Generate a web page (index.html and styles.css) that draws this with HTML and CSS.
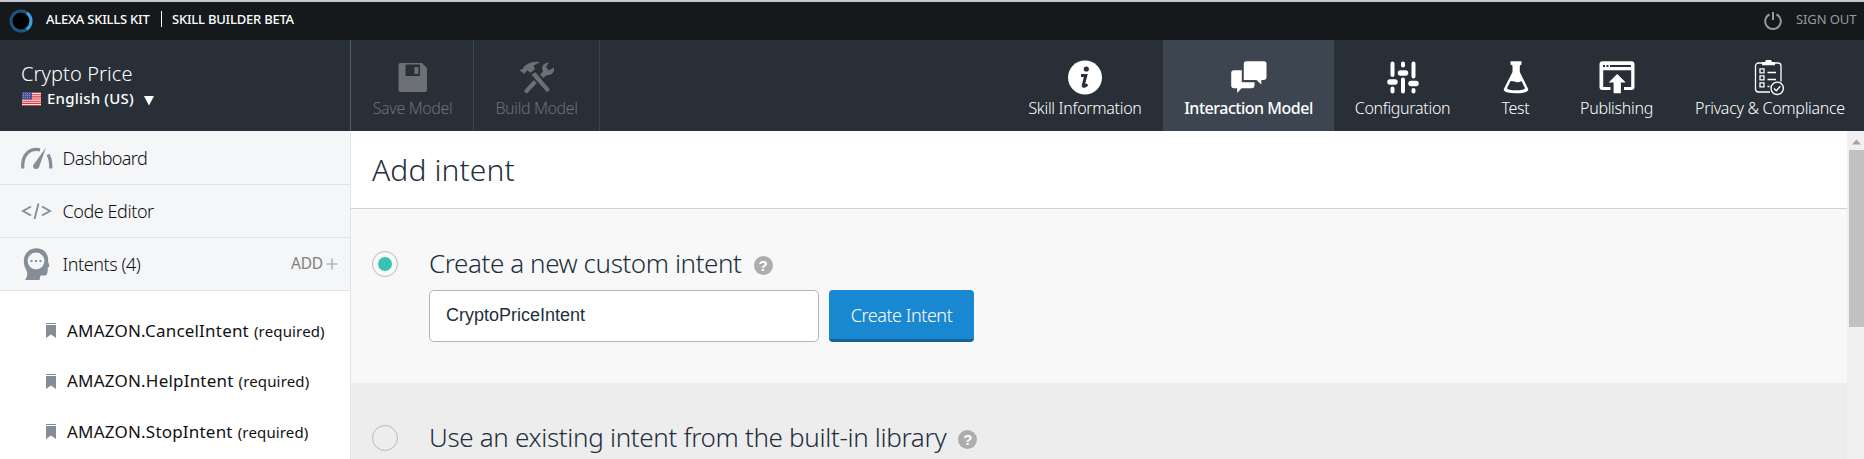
FILE: index.html
```html
<!DOCTYPE html>
<html lang="en">
<head>
<meta charset="utf-8">
<title>Skill Builder</title>
<link rel="stylesheet" href="styles.css">
</head>
<body>
<div class="topbar">
  <svg class="ring" viewBox="0 0 24 24"><circle cx="12" cy="12" r="10" fill="#000" stroke="#1c557e" stroke-width="3"/><path d="M18 4A10 10 0 0 1 17.500 20.300" fill="none" stroke="#409cda" stroke-width="3"/></svg>
  <span class="brand kit">ALEXA SKILLS KIT</span>
  <span class="bar"></span>
  <span class="brand beta">SKILL BUILDER BETA</span>
  <svg class="power" viewBox="0 0 20 20" fill="none" stroke="#999" stroke-width="2"><path d="M6.500 3.300A7.800 7.800 0 1 0 13.500 3.300M10 1v8"/></svg>
  <span class="brand signout">SIGN OUT</span>
</div>
<header class="header">
  <div class="skill">
    <div class="skill-name"><span>Crypto Price</span></div>
    <div class="locale">
      <svg class="flag" viewBox="0 0 19 14"><path fill="#f5e9ea" d="M0 0h19v14H0z"/><path stroke="#d9363e" stroke-width="1.100" d="M0 .5h19M0 2.700h19M0 4.900h19M0 7h19M0 9.200h19M0 11.400h19M0 13.500h19"/><path fill="#4a4f93" d="M0 0h10v7.500H0z"/><path stroke="#a7aacb" stroke-width=".8" stroke-dasharray="1 1" d="M1 1.500h8M1 3.500h8M1 5.500h8"/></svg>
      <span class="lang">English (US)</span>
      <svg class="caret" viewBox="0 0 10 10"><path fill="#fff" d="M0 0h10L5 9.500z"/></svg>
    </div>
  </div>
  <div class="tool save">
    <svg class="icon" viewBox="0 0 36 36"><path fill="#6c7075" fill-rule="evenodd" d="M5.500 3H27l5 5v22a2 2 0 0 1-2 2H5.500a2 2 0 0 1-2-2V5a2 2 0 0 1 2-2zM11.500 4.500a1 1 0 0 0-1 1V15a1 1 0 0 0 1 1H24a1 1 0 0 0 1-1V5.500a1 1 0 0 0-1-1zM19.500 7h4v7h-4z"/></svg>
    <span>Save Model</span>
  </div>
  <div class="tool build">
    <svg class="icon" viewBox="0 0 36 36"><g fill="#6c7075"><path d="M.5 10L5 14l3-3.500 4 2.200 4-4-1.500-3L21 2Q12 .5 5.500 6l-1.800 3z"/><path d="M12.500 14.800L28 32.300l3-2.600L16.500 12.300z"/><path d="M14.800 20l3 3L9 32.500a2 2 0 0 1-3-3z"/><path d="M21 14.500l3-3a6 6 0 0 1 6-9l-3 4.500 3 3.500 5-3c1 5-3 8-7 7.500l-4 3z"/></g></svg>
    <span>Build Model</span>
  </div>
  <nav class="nav">
    <div class="item info">
      <svg class="icon" viewBox="0 0 36 36"><circle cx="18" cy="17.500" r="17" fill="#fff"/><circle cx="19.300" cy="9" r="2.600" fill="#282f37"/><path fill="none" stroke="#282f37" stroke-width="3" d="M14 15.500h4.800l-2.500 9.500c-.4 2 1.700 1.800 4-.7"/></svg>
      <span>Skill Information</span>
    </div>
    <div class="item model active">
      <svg class="icon" viewBox="0 0 36 36"><path fill="#fff" d="M15.300 1.300H33a2.500 2.500 0 0 1 2.500 2.500V17a3 3 0 0 1-3 3H30.300v4.500L25.500 20H12.800V3.800a2.500 2.500 0 0 1 2.500-2.500zM3 10.300h7.800v12h12.700v3a3 3 0 0 1-3 3H10.500L6.200 33v-4.700H3a3 3 0 0 1-2.800-3V13A2.800 2.800 0 0 1 3 10.300z"/></svg>
      <span>Interaction Model</span>
    </div>
    <div class="item config">
      <svg class="icon" viewBox="0 0 36 36" stroke="#fff" stroke-linecap="round" fill="none"><path stroke-width="4" d="M7.500 3.500V15M7.500 28.500v3M18 3.500v2M18 19.500v12M28.500 3.500v13M28.500 30v1.500"/><path stroke-width="5.500" d="M5 22h5M15.500 13h5M26 23.600h5"/></svg>
      <span>Configuration</span>
    </div>
    <div class="item test">
      <svg class="icon" viewBox="0 0 36 36"><path fill="#fff" fill-rule="evenodd" d="M12.500 1.300h11V4.500L21.800 5.500V12l8.400 17q1 4.300-12.200 4.300T5.800 29l8.700-17V5.500l-2-1zM12.500 21L9 28.300q1 2 9 2t9-2L23.500 21q-3 2-5.500 1t-5.500-1z"/></svg>
      <span>Test</span>
    </div>
    <div class="item publish">
      <svg class="icon" viewBox="0 0 36 36"><path fill="#fff" fill-rule="evenodd" d="M3.500 1.300h29a3 3 0 0 1 3 3V27a3 3 0 0 1-3 3H25v-3h7.200V10.300h-28V27h7.300v3H3.500a3 3 0 0 1-3-3V4.300a3 3 0 0 1 3-3zM4 5v2h2V5zM7.500 5v2h2V5zM11 5v2h21V5z"/><path fill="#fff" d="M18.200 14l8.600 8.500h-4.900v10.800h-7.300V22.500h-5z"/></svg>
      <span>Publishing</span>
    </div>
    <div class="item privacy">
      <svg class="icon" viewBox="0 0 36 36" fill="none" stroke="#fff" stroke-width="1.300"><path d="M10 3H6.500a3 3 0 0 0-3 3v23a3 3 0 0 0 3 3H18M23 3h3a3 3 0 0 1 3 3v15.500"/><path fill="#fff" stroke="none" d="M10 2h3l1-2h5l1 2h3v3.200H10z"/><path d="M8 8.800h4v4H8zM8 15.800h4v4H8zM8 22.800h4v4H8zM15.500 12.500H24M15.500 19.500H24M15.500 26.500h2"/><circle cx="25.200" cy="28.300" r="6.200"/><path d="M22 28.500l2.300 2.300 4-4.600"/></svg>
      <span>Privacy &amp; Compliance</span>
    </div>
  </nav>
</header>
<div class="body">
  <aside class="side">
    <div class="row dash">
      <svg class="side-icon" viewBox="0 0 34 36" fill="none" stroke="#858e98"><path stroke-width="3.300" d="M2.700 28.500C1.800 14 10 8 20 9.800M28 14.500q3 5 2.800 14"/><path fill="#858e98" stroke="none" d="M26 7.500L13 25.500a3.200 3.200 0 0 0 5.800 2.200z"/></svg>
      <span>Dashboard</span>
    </div>
    <div class="row code">
      <svg class="side-icon" viewBox="0 0 34 36" fill="none" stroke="#858e98" stroke-width="1.900"><path d="M11 13.500L3 18l8 4.500M18.500 10.500l-4 15.500M22 13.500L30 18l-8 4.500"/></svg>
      <span>Code Editor</span>
    </div>
    <div class="row intents">
      <svg class="side-icon" viewBox="0 0 34 36"><path fill="#858e98" d="M5 34q4-5 1-10.500C.5 13 6 2.500 16 2.200 24.500 2 29 9 28 15l1.500 5.500-1.800 1.200c.2 5-.5 8-3.700 7.800H20.500L19.500 34z"/><circle cx="16" cy="15" r="8.400" fill="#f5f6f8"/><path stroke="#858e98" stroke-width="2" d="M10.500 15h2M15 15h2M19.500 15h2"/></svg>
      <span>Intents (4)</span>
      <span class="add">ADD</span>
      <svg class="plus" viewBox="0 0 12 12"><path stroke="#b3b9c0" stroke-width="1.600" d="M6 .5v11M.5 6h11"/></svg>
    </div>
    <ul class="list">
      <li><svg class="mark" viewBox="0 0 10 16"><path fill="#858e98" d="M0 0h10v1H0zM0 2h10v13l-5-3.500L0 15z"/></svg><span class="name">AMAZON.CancelIntent</span><span class="req">(required)</span></li>
      <li><svg class="mark" viewBox="0 0 10 16"><path fill="#858e98" d="M0 0h10v1H0zM0 2h10v13l-5-3.500L0 15z"/></svg><span class="name">AMAZON.HelpIntent</span><span class="req">(required)</span></li>
      <li><svg class="mark" viewBox="0 0 10 16"><path fill="#858e98" d="M0 0h10v1H0zM0 2h10v13l-5-3.500L0 15z"/></svg><span class="name">AMAZON.StopIntent</span><span class="req">(required)</span></li>
    </ul>
  </aside>
  <main class="main">
    <h1 class="title"><span>Add intent</span></h1>
    <section class="option custom">
      <span class="radio on"></span>
      <div class="fields">
        <div class="label"><span class="create-label">Create a new custom intent</span><span class="help">?</span></div>
        <div class="form"><input class="input" type="text" value="CryptoPriceIntent"><button class="button"><span>Create Intent</span></button></div>
      </div>
    </section>
    <section class="option builtin">
      <span class="radio"></span>
      <div class="fields">
        <div class="label"><span class="existing-label">Use an existing intent from the built-in library</span><span class="help">?</span></div>
      </div>
    </section>
  </main>
  <div class="scroll">
    <svg class="up" viewBox="0 0 17 19"><path fill="#a3a3a3" d="M5 13.500h9L9.500 8.500z"/></svg>
    <div class="thumb"></div>
  </div>
</div>
</body>
</html>
```
FILE: styles.css
```css
* { box-sizing: border-box; }
body { margin: 0; height: 459px; overflow: hidden; font-family: "Noto Sans", "Open Sans", sans-serif; font-weight: 300; color: #111; display: flex; flex-direction: column; }
svg { display: block; flex: none; }
span { white-space: nowrap; }
.topbar { height: 40px; flex: none; background: #15191b; border-top: 2px solid #c9c9cb; display: flex; align-items: flex-start; padding-left: 9px; }
.ring { width: 24px; height: 24px; margin-top: 7px; }
.brand { font-size: 13px; line-height: 20px; margin-top: 7px; font-weight: 500; color: #fff; letter-spacing: -0.22px; }
.kit { margin-left: 13px; width: 107px; }
.bar { width: 1px; height: 16px; background: #fff; margin: 9px 10px 0 8px; }
.power { width: 20px; height: 20px; margin: 9px 13px 0 auto; }
.signout { width: 68px; color: #999; font-weight: 400; letter-spacing: -0.1px; }
.header { height: 91px; flex: none; background: #282f37; display: flex; }
.skill { width: 351px; border-right: 1px solid #56616d; padding: 20px 0 0 21px; color: #fff; }
.skill-name { font-size: 20px; line-height: 28px; letter-spacing: 0.1px; }
.locale { display: flex; align-items: center; height: 20px; }
.flag { width: 19px; height: 14px; margin: 2px 6px 0 1px; }
.lang { font-size: 15px; font-weight: 500; width: 97px; letter-spacing: 0.2px; }
.caret { width: 10px; height: 10px; margin-top: 6px; }
.tool { border-right: 1px solid #3a434e; color: #6c7075; letter-spacing: -0.38px; }
.tool, .item { display: flex; flex-direction: column; align-items: center; padding-top: 20px; font-size: 16px; line-height: 24px; }
.save { width: 123px; padding-left: 1px; }
.build { width: 126px; }
.icon { width: 36px; height: 36px; }
.nav { margin-left: auto; display: flex; color: #fff; letter-spacing: -0.3px; }
.info { width: 156px; }
.model { width: 171px; }
.config { width: 137px; }
.test { width: 89px; }
.publish { width: 113px; }
.privacy { width: 191px; padding-left: 3px; }
.active { background: #3d4650; font-weight: 500; letter-spacing: -0.48px; }
.body { flex: 1; display: flex; min-height: 0; }
.side { width: 351px; flex: none; border-right: 1px solid #e2e3e5; background: #fff; }
.row { height: 53px; display: flex; align-items: center; background: #f5f6f8; border-bottom: 1px solid #e2e3e5; padding-left: 20px; font-size: 18px; letter-spacing: -0.43px; }
.dash { height: 54px; letter-spacing: -0.62px; }
.side-icon { width: 34px; height: 36px; margin-right: 8.500px; }
.add { margin: 0 0 2px auto; width: 35px; font-size: 15.500px; font-weight: 400; letter-spacing: -0.2px; color: #808080; }
.plus { width: 12px; height: 12px; margin-right: 12px; }
.list { list-style: none; margin: 0; padding: 15px 0 0 46px; }
.list li { height: 50.500px; display: flex; align-items: center; color: #111; font-weight: 400; }
.mark { width: 10px; height: 16px; margin-right: 11px; }
.name { font-size: 17px; margin: 0 5px 2px 0; letter-spacing: 0.2px; }
.req { font-size: 15px; margin-bottom: 1px; letter-spacing: 0.15px; }
.main { flex: 1; min-width: 0; background: #f8f8f8; color: #232f3e; }
.title { margin: 0; height: 78px; background: #fff; border-bottom: 1px solid #cfd2d6; padding-left: 21px; font-size: 30px; line-height: 77px; font-weight: 300; letter-spacing: 0.1px; }
.option { display: flex; padding-left: 21px; }
.custom { height: 174px; padding-top: 36px; }
.builtin { height: 76px; padding-top: 36px; background: #ededed; }
.radio { width: 26px; height: 26px; margin: 6px 31px 0 0; border: 1px solid #b5b9c1; border-radius: 50%; flex: none; display: grid; place-items: center; }
.on::after { content: ""; width: 14px; height: 14px; border-radius: 50%; background: #37c2b3; }
.label { display: flex; align-items: center; font-size: 26px; height: 36px; }
.create-label { letter-spacing: -0.42px; }
.existing-label { letter-spacing: -0.33px; }
.help { width: 19px; height: 19px; border-radius: 50%; background: #adadad; color: #fff; font: bold 15px/19px "Liberation Sans", sans-serif; text-align: center; margin: 5px 0 0 12px; }
.form { display: flex; gap: 10px; margin-top: 9px; }
.input { width: 390px; height: 52px; border: 1px solid #b0b5bd; border-radius: 5px; background: #fff; padding: 0 16px 2px; font: 18px "Liberation Sans", Arial, sans-serif; color: #232f3e; }
.button { width: 145px; height: 52px; padding: 0; border: 0; border-bottom: 3px solid #11649c; border-radius: 4px; background: #1a87d1; color: #fff; font: 300 18px "Noto Sans", sans-serif; letter-spacing: -0.45px; }
.scroll { width: 17px; flex: none; background: #f0f0f0; }
.up { width: 17px; height: 19px; }
.thumb { width: 15px; height: 177px; margin-left: 2px; background: #c1c1c1; }
```
